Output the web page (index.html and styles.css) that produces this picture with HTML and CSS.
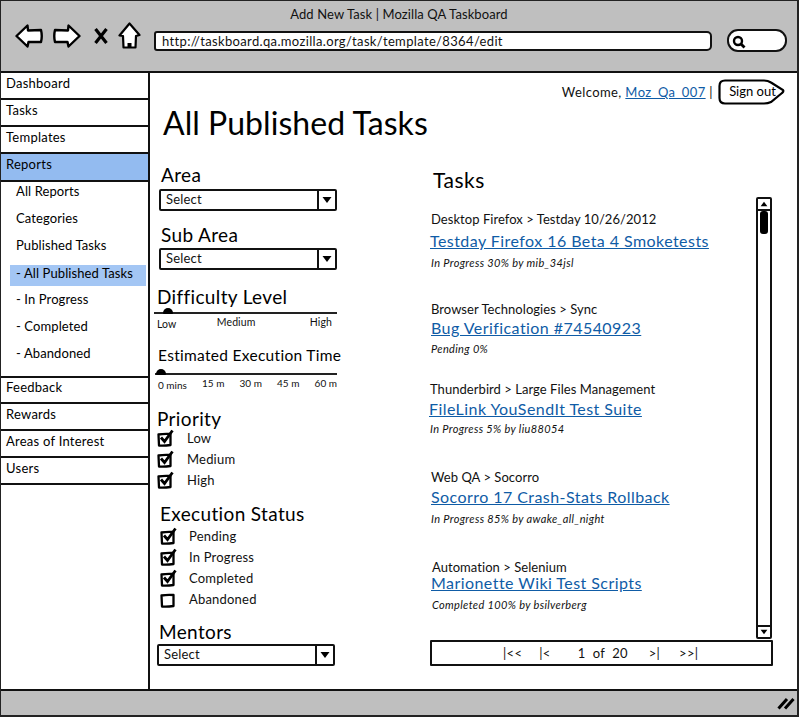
FILE: index.html
```html
<!DOCTYPE html>
<html lang="en">
<head>
    <meta charset="UTF-8">
    <title>Add New Task | Mozilla QA Taskboard</title>
    <link rel="stylesheet" href="styles.css">
</head>
<body>
<svg class="defs" width="0" height="0">
    <symbol id="box" viewBox="0 0 18 18">
        <path d="M1.5 5.5 Q7 4.5 13.5 5 L13.5 16 Q7 17 2 16.5 Z" fill="#fff" stroke="#000" stroke-width="2.3" stroke-linejoin="round"/>
    </symbol>
    <symbol id="check" viewBox="0 0 18 18">
        <path d="M1.5 5.5 Q7 4.5 13.5 5 L13.5 16 Q7 17 2 16.5 Z" fill="#fff" stroke="#000" stroke-width="2.3" stroke-linejoin="round"/>
        <path d="M4 8.5 L7.5 12.5 L15.5 1.5" fill="none" stroke="#000" stroke-width="2.8"/>
    </symbol>
    <symbol id="arrow" viewBox="0 0 10 8">
        <path d="M0.5 1 L9.5 1 L5 7 Z" fill="#000"/>
    </symbol>
</svg>
<div class="window">
    <header class="chrome">
        <div class="chrome_title">Add New Task | Mozilla QA Taskboard</div>
        <div class="toolbar">
            <svg class="ico_back" viewBox="0 0 28 24"><path d="M1.5 12 L12.5 1.5 L13 6.5 L26 6 Q27.5 12 26 18 L13.5 18 L12.5 22.5 Z" fill="#fff" stroke="#000" stroke-width="2.4" stroke-linejoin="round"/></svg>
            <svg class="ico_next" viewBox="0 0 28 24"><path d="M26.5 12 L15.5 1.5 L15 6.5 L2 6 Q0.5 12 2 18 L14.5 18 L15.5 22.5 Z" fill="#fff" stroke="#000" stroke-width="2.4" stroke-linejoin="round"/></svg>
            <svg class="ico_stop" viewBox="0 0 14 16"><path d="M1.5 1 L12.5 15 M12.5 1 L1.5 15" fill="none" stroke="#000" stroke-width="3.2"/></svg>
            <svg class="ico_home" viewBox="0 0 23 27"><path d="M11.5 1.5 L1.5 13.5 L5 14 L5.5 25.5 L17.5 25.5 L18 14 L21.5 13 Z" fill="#fff" stroke="#000" stroke-width="2.2" stroke-linejoin="round"/><rect x="9.5" y="21" width="4" height="4.5" fill="#000"/></svg>
            <div class="url_field">http://taskboard.qa.mozilla.org/task/template/8364/edit</div>
            <div class="search_field">
                <svg class="ico_search" viewBox="0 0 14 14"><circle cx="6" cy="6" r="4" fill="none" stroke="#000" stroke-width="2.4"/><path d="M8.5 8.5 L12.5 12.5" stroke="#000" stroke-width="2.8"/></svg>
            </div>
        </div>
    </header>

    <div class="page">
        <nav class="sidebar">
            <a class="nav_item" href="#">Dashboard</a>
            <a class="nav_item" href="#">Tasks</a>
            <a class="nav_item" href="#">Templates</a>
            <a class="nav_item nav_sel" href="#">Reports</a>
            <ul class="subnav">
                <li><a href="#">All Reports</a></li>
                <li><a href="#">Categories</a></li>
                <li><a href="#">Published Tasks</a></li>
                <li class="sub_sel"><a href="#">- All Published Tasks</a></li>
                <li><a href="#">- In Progress</a></li>
                <li><a href="#">- Completed</a></li>
                <li><a href="#">- Abandoned</a></li>
            </ul>
            <a class="nav_item nav_after" href="#">Feedback</a>
            <a class="nav_item" href="#">Rewards</a>
            <a class="nav_item" href="#">Areas of Interest</a>
            <a class="nav_item" href="#">Users</a>
        </nav>

        <main class="content">
            <div class="userbar">
                <span>Welcome, <a class="link" href="#">Moz_Qa_007</a> |</span>
                <a class="signout" href="#">
                    <svg class="signout_bg" viewBox="0 0 67 26" preserveAspectRatio="none"><path d="M7 1.5 L46 1.5 Q50 1.5 53 3.5 L65 11 Q66 12.5 64 14 L53 23 Q50 24.5 46 24.5 L7 24.5 Q1.5 24.5 1.5 19 L1.5 7 Q1.5 1.5 7 1.5 Z" fill="#fff" stroke="#000" stroke-width="2.2"/></svg>
                    <span class="signout_text">Sign out</span>
                </a>
            </div>
            <h1>All Published Tasks</h1>

            <div class="columns">
                <section class="filters">
                    <h3 class="f_area">Area</h3>
                    <div class="select s_area"><span>Select</span><i><svg><use href="#arrow"/></svg></i></div>

                    <h3 class="f_sub">Sub Area</h3>
                    <div class="select s_sub"><span>Select</span><i><svg><use href="#arrow"/></svg></i></div>

                    <h3 class="f_diff">Difficulty Level</h3>
                    <div class="slider"><b class="thumb thumb_diff"></b></div>
                    <div class="ticks ticks_diff"><span class="low">Low</span><span class="mid">Medium</span><span>High</span></div>

                    <h4 class="f_time">Estimated Execution Time</h4>
                    <div class="slider slider_time"><b class="thumb thumb_time"></b></div>
                    <div class="ticks ticks_time"><span class="low">0 mins</span><span>15 m</span><span>30 m</span><span>45 m</span><span>60 m</span></div>

                    <h3 class="f_prio">Priority</h3>
                    <ul class="checks checks_prio">
                        <li><svg><use href="#check"/></svg>Low</li>
                        <li><svg><use href="#check"/></svg>Medium</li>
                        <li><svg><use href="#check"/></svg>High</li>
                    </ul>

                    <h3 class="f_status">Execution Status</h3>
                    <ul class="checks checks_status">
                        <li><svg><use href="#check"/></svg>Pending</li>
                        <li><svg><use href="#check"/></svg>In Progress</li>
                        <li><svg><use href="#check"/></svg>Completed</li>
                        <li><svg><use href="#box"/></svg>Abandoned</li>
                    </ul>

                    <h3 class="f_ment">Mentors</h3>
                    <div class="select s_ment"><span>Select</span><i><svg><use href="#arrow"/></svg></i></div>
                </section>

                <section class="tasks">
                    <div class="tasks_row">
                        <div class="task_list">
                            <h2>Tasks</h2>
                            <article class="task t1">
                                <p class="crumb">Desktop Firefox &gt; Testday 10/26/2012</p>
                                <a class="link task_link" href="#">Testday Firefox 16 Beta 4 Smoketests</a>
                                <p class="meta">In Progress 30% by mib_34jsl</p>
                            </article>
                            <article class="task t2">
                                <p class="crumb">Browser Technologies &gt; Sync</p>
                                <a class="link task_link" href="#">Bug Verification #74540923</a>
                                <p class="meta">Pending 0%</p>
                            </article>
                            <article class="task t3">
                                <p class="crumb">Thunderbird &gt; Large Files Management</p>
                                <a class="link task_link" href="#">FileLink YouSendIt Test Suite</a>
                                <p class="meta">In Progress 5% by liu88054</p>
                            </article>
                            <article class="task t4">
                                <p class="crumb">Web QA &gt; Socorro</p>
                                <a class="link task_link" href="#">Socorro 17 Crash-Stats Rollback</a>
                                <p class="meta">In Progress 85% by awake_all_night</p>
                            </article>
                            <article class="task t5">
                                <p class="crumb">Automation &gt; Selenium</p>
                                <a class="link task_link" href="#">Marionette Wiki Test Scripts</a>
                                <p class="meta">Completed 100% by bsilverberg</p>
                            </article>
                        </div>
                        <div class="scrollbar">
                            <div class="sb_btn"><svg class="sb_up"><use href="#arrow"/></svg></div>
                            <div class="sb_track"><b class="sb_thumb"></b></div>
                            <div class="sb_btn"><svg><use href="#arrow"/></svg></div>
                        </div>
                    </div>
                    <div class="pager">
                        <span class="p_first">|&lt;&lt;</span>
                        <span class="p_prev">|&lt;</span>
                        <span class="p_count">1&nbsp; of&nbsp; 20</span>
                        <span class="p_next">&gt;|</span>
                        <span class="p_last">&gt;&gt;|</span>
                    </div>
                </section>
            </div>
        </main>
    </div>

    <footer class="statusbar">
        <svg class="ico_grip" viewBox="0 0 18 14"><path d="M1.5 12.5 L10 3 M8 12.5 L16.5 3" fill="none" stroke="#000" stroke-width="3"/></svg>
    </footer>
</div>
</body>
</html>
```

FILE: styles.css
```css
*{margin:0; padding:0; box-sizing:border-box;}
li{list-style:none;}
a{color:#000; text-decoration:none;}
body{font-family:"Lato","Liberation Sans",sans-serif; font-size:13px; color:#111; background:#fff;}
.defs{display:block; height:0;}

.window{display:flex; flex-direction:column; width:799px; height:717px; border:2px solid #222; border-left-width:1px; border-top-width:1px; overflow:hidden;}

/* browser chrome */
.chrome{flex:none; height:72px; background:#bfbfbf; border-bottom:2px solid #111;}
.chrome_title{height:26px; padding-top:5px; text-align:center; font-size:13px; letter-spacing:.1px; line-height:16px;}
.toolbar{display:flex; align-items:flex-start; padding-left:14px;}
.toolbar svg{display:block; flex:none;}
.ico_back{width:28px; height:24px; margin-top:-3px;}
.ico_next{width:28px; height:24px; margin:-3px 0 0 10px;}
.ico_stop{width:14px; height:16px; margin:1px 0 0 13px;}
.ico_home{width:23px; height:27px; margin:-5px 0 0 10px;}
.url_field{width:558px; height:20px; margin:4px 0 0 13px; padding-left:6px; background:#fff; border:2px solid #111; border-radius:3px 5px 5px 3px; font-size:13px; line-height:16px; letter-spacing:.35px;}
.search_field{width:60px; height:23px; margin:2px 0 0 15px; padding:4px 0 0 3px; background:#fff; border:2px solid #111; border-radius:11px;}
.toolbar .ico_search{width:14px; height:14px;}

.page{flex:1; display:flex; min-height:0;}

/* left menu */
.sidebar{flex:none; display:flex; flex-direction:column; width:149px; border-right:2px solid #111;}
.nav_item{display:block; height:27px; padding:2px 0 0 5px; background:#fff; border-bottom:2px solid #111; font-size:13px; line-height:16px; letter-spacing:.25px;}
.nav_sel{height:28px; background:#93bbf0;}
.nav_after{border-top:2px solid #111; height:28px; padding-top:1px;}
.subnav{height:194px;}
.subnav li{height:27px; padding:1px 0 0 15px; line-height:16px; letter-spacing:.25px;}
.subnav li.sub_sel{width:136px; height:21px; margin:2px 0 4px 9px; padding:0 0 0 6px; background:#a3c6f4; line-height:16px;}
.subnav a{letter-spacing:.1px;}

/* main area */
.content{flex:1; min-width:0;}
.userbar{display:flex; justify-content:flex-end; align-items:center; height:32px; padding:6px 12px 0 0; font-size:13px; letter-spacing:.4px;}
.link{color:#0f5ca6; text-decoration:underline;}
.signout{position:relative; display:block; width:67px; height:26px; margin-left:5px; padding-left:2px; text-align:center; line-height:24px;}
.signout_bg{position:absolute; top:0; left:0; width:67px; height:26px;}
.signout_text{position:relative; letter-spacing:0;}
h1{height:38px; padding-left:13px; font-size:32px; font-weight:400; line-height:36px; letter-spacing:.05px; color:#000;}

.columns{display:flex;}

/* filter column */
.filters{flex:none; width:280px; padding:21px 0 0 6px;}
.filters h3{font-size:19px; font-weight:400; line-height:22px; letter-spacing:.35px; color:#000;}
.filters h4{font-size:15.5px; font-weight:400; line-height:20px; letter-spacing:.3px; color:#000;}
.f_area,.f_sub{margin-left:5px;}
.f_sub{margin-top:13px;}
.f_diff{margin:16px 0 0 1px;}
.f_time{margin:16px 0 0 2px;}
.f_prio{margin:18px 0 0 1px;}
.f_status{margin:13px 0 0 4px;}
.f_ment{margin:12px 0 0 3px;}

.select{display:flex; justify-content:space-between; width:178px; height:22px; background:#fff; border:2px solid #111; border-radius:2px; line-height:17px;}
.select span{padding-left:5px; letter-spacing:.2px;}
.select i{display:flex; align-items:center; justify-content:center; width:18px; border-left:2px solid #111;}
.select svg{display:block; width:10px; height:8px;}
.s_area{margin:3px 0 0 3px;}
.s_sub{margin:2px 0 0 3px;}
.s_ment{margin:1px 0 0 1px;}

.slider{position:relative; width:183px; height:2px; margin:4px 0 0 -2px; background:#222;}
.slider_time{margin-top:8px; margin-left:-1px; width:182px;}
.thumb{position:absolute; top:-4px; width:10px; height:6px; background:#000; border-radius:5px 5px 1px 1px;}
.thumb_diff{left:9px;}
.thumb_time{left:1px;}
.ticks{display:flex; justify-content:space-between; line-height:13px;}
.ticks_diff{width:175px; margin:2px 0 0 1px; font-size:10.5px; letter-spacing:.1px;}
.ticks_diff .mid{margin-right:14px;}
.ticks_time{width:179px; margin:2px 0 0 2px; font-size:10px;}
.low{position:relative; top:2px;}

.checks li{display:flex; align-items:center; height:21px; letter-spacing:.2px;}
.checks svg{display:block; flex:none; width:18px; height:18px;}
.checks_prio{margin:-3px 0 0 1px;}
.checks_prio li svg{margin-right:12px;}
.checks_status{margin-left:4px;}
.checks_status li svg{margin-right:11px;}

/* task list */
.tasks{flex:none; width:343px;}
.tasks_row{display:flex; height:497px;}
.task_list{flex:1; min-width:0;}
h2{height:22px; margin:26px 0 0 3px; font-size:21px; font-weight:400; line-height:22px; letter-spacing:.5px; color:#000;}
.task{height:88px;}
.crumb{font-size:13px; line-height:16px; letter-spacing:.05px;}
.task_link{display:inline-block; margin:4px 0 0 -1px; font-size:16px; line-height:19px; letter-spacing:.44px;}
.meta{margin-top:6px; font-size:11px; font-style:italic; line-height:13px; letter-spacing:.35px;}
.t1{height:90px; margin-top:20px; padding-left:1px;}
.t2{height:80px; padding-left:1px;}
.t3{height:88px;}
.t4{height:90px; padding-left:1px;}
.t5{padding-left:2px;}
.t5 .task_link{margin-top:-2px;}
.t2 .task_link{margin:1px 0 0;}
.t2 .meta{margin-top:5px;}
.t3 .task_link{margin-top:2px;}
.t3 .meta{margin-top:4px;}
.t4 .task_link{margin:2px 0 0;}

.scrollbar{flex:none; display:flex; flex-direction:column; width:16px; height:442px; margin:54px 1px 0 0; background:#fff; border:2px solid #111; border-radius:2px;}
.sb_btn{flex:none; display:flex; align-items:center; justify-content:center; height:10px;}
.sb_btn svg{display:block; width:8px; height:6px;}
.sb_up{transform:rotate(180deg);}
.sb_track{flex:1; padding:0 2px; border-top:2px solid #111; border-bottom:2px solid #111;}
.sb_thumb{display:block; width:8px; height:23px; background:#000; border-radius:3px;}

.pager{display:flex; align-items:center; height:26px; padding-left:71px; background:#fff; border:2px solid #111; border-radius:1px; letter-spacing:.3px;}
.p_prev{margin-left:17px;}
.p_count{margin-left:27px; width:71px;}
.p_last{margin-left:19px;}

.statusbar{flex:none; display:flex; justify-content:flex-end; align-items:center; height:26px; padding-right:2px; background:#bfbfbf; border-top:2px solid #111;}
.ico_grip{display:block; width:18px; height:14px;}
```
